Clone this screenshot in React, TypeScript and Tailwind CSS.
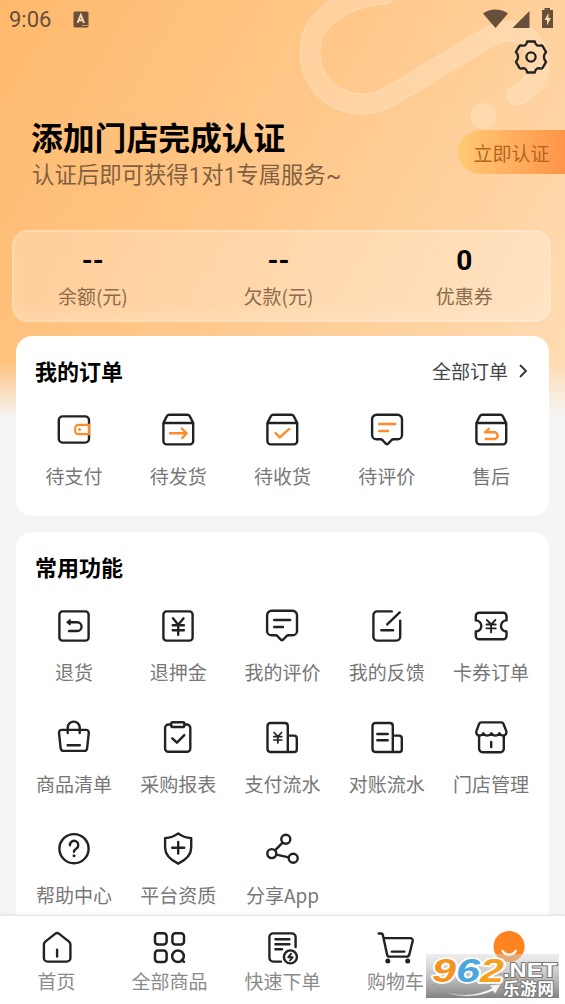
import type { ReactNode } from "react";

const INK = "#222222";
const ORANGE = "#ff8a2a";

type IconProps = {
  children: ReactNode;
  width?: number;
};

const Icon = ({ children, width = 2.4 }: IconProps) => (
  <svg
    width="36"
    height="36"
    viewBox="0 0 36 36"
    fill="none"
    stroke={INK}
    strokeWidth={width}
    strokeLinecap="round"
    strokeLinejoin="round"
    className="shrink-0 overflow-visible"
  >
    {children}
  </svg>
);

const Box = () => (
  <path d="M3.4 11v18a3.4 3.4 0 0 0 3.4 3.4h23a3.4 3.4 0 0 0 3.4-3.4V11H3.4L6.6 4.6A3 3 0 0 1 9.2 2.8h18.2A3 3 0 0 1 30 4.6L33.2 11" />
);

const Bubble = () => (
  <path d="M7.5 2.8h21A4.4 4.4 0 0 1 33 7.2v15.7a4.4 4.4 0 0 1-4.4 4.4h-4.2c-.8 0-1.4.3-2 .9L18.9 31.9a1.3 1.3 0 0 1-1.8 0L13.6 28.2c-.6-.6-1.2-.9-2-.9H7.5A4.4 4.4 0 0 1 3.1 22.9V7.2A4.4 4.4 0 0 1 7.5 2.8z" />
);

const Building = () => (
  <path d="M24 15.6h6a2.8 2.8 0 0 1 2.8 2.8v11a2.6 2.6 0 0 1-2.6 2.6H6.4a2.9 2.9 0 0 1-2.9-2.9V5.9A2.9 2.9 0 0 1 6.4 3h14.5a2.9 2.9 0 0 1 2.9 2.9V32" />
);

const orders = [
  {
    label: "待支付",
    icon: (
      <Icon>
        <rect x="2.8" y="4.4" width="30.2" height="26.2" rx="3.8" />
        <path d="M34 12.9H22.5a3.3 3.3 0 0 0-3.3 3.3v2.7a3.3 3.3 0 0 0 3.3 3.3H34" stroke={ORANGE} fill="#fff" strokeLinecap="butt" strokeWidth="2.2" />
        <path d="M33 12v11" stroke={ORANGE} strokeLinecap="butt" />
        <circle cx="23.5" cy="17.5" r="1.5" fill={ORANGE} stroke="none" />
      </Icon>
    ),
  },
  {
    label: "待发货",
    icon: (
      <Icon>
        <Box />
        <path d="M10 21.3h16.2M21.8 16.5l4.8 4.8-4.3 4.7" stroke={ORANGE} />
      </Icon>
    ),
  },
  {
    label: "待收货",
    icon: (
      <Icon>
        <Box />
        <path d="M11.5 21l4.3 4.4 9.4-8.5" stroke={ORANGE} />
      </Icon>
    ),
  },
  {
    label: "待评价",
    icon: (
      <Icon>
        <Bubble />
        <path d="M10.2 12h16M10.2 19H19" stroke={ORANGE} />
      </Icon>
    ),
  },
  {
    label: "售后",
    icon: (
      <Icon>
        <Box />
        <path d="M15.8 16.8l-3.8 3.5h9.3a3.35 3.35 0 0 1 0 6.7h-8.6" stroke={ORANGE} />
      </Icon>
    ),
  },
];

const functions = [
  {
    label: "退货",
    icon: (
      <Icon>
        <rect x="3.4" y="3.4" width="29.2" height="29.2" rx="3.2" />
        <path d="M13 14.3h8.2a4.35 4.35 0 0 1 0 8.7H13" />
        <path d="M14 11.8v5l-3-2.5z" fill={INK} strokeWidth="1.4" />
      </Icon>
    ),
  },
  {
    label: "退押金",
    icon: (
      <Icon>
        <rect x="3.4" y="3.4" width="29.2" height="29.2" rx="3.2" />
        <path d="M13 10.3l5.2 6.4 5.4-6.4M12.7 17.2h11.2M12.7 22.2h11.2M18.2 16.7v10" />
      </Icon>
    ),
  },
  {
    label: "我的评价",
    icon: (
      <Icon>
        <Bubble />
        <path d="M10.2 12h16M10.2 19H19" />
      </Icon>
    ),
  },
  {
    label: "我的反馈",
    icon: (
      <Icon>
        <path d="M22.8 3.4H8.2a3.8 3.8 0 0 0-3.8 3.8v21.6a3.8 3.8 0 0 0 3.8 3.8h19.2a3.8 3.8 0 0 0 3.8-3.8V12.6M30.7 4.4L18.2 16.4M12.3 22.3h11.8" />
      </Icon>
    ),
  },
  {
    label: "卡券订单",
    icon: (
      <Icon>
        <path d="M6.2 4.7h23.9a3.4 3.4 0 0 1 3.4 3.4v4.3a5.5 5.5 0 0 0 0 11.1v4.4a3.4 3.4 0 0 1-3.4 3.4H6.2a3.4 3.4 0 0 1-3.4-3.4v-4.4a5.5 5.5 0 0 0 0-11.1V8.1a3.4 3.4 0 0 1 3.4-3.4z" />
        <path d="M13.9 12l4.2 4.3 4.3-4.3M13.5 16.5h9.2M13.5 20.4h9.2M18.1 16.3v8.1" strokeWidth="1.9" />
      </Icon>
    ),
  },
  {
    label: "商品清单",
    icon: (
      <Icon>
        <path d="M5.6 9.9h24.6a2.7 2.7 0 0 1 2.6 3l-1.7 15.4a3 3 0 0 1-3 2.6H7.7a3 3 0 0 1-3-2.6L3 12.9a2.7 2.7 0 0 1 2.6-3zM11.7 13V7.6a6 6 0 0 1 12 0V13M11.6 25.2h12.2" />
      </Icon>
    ),
  },
  {
    label: "采购报表",
    icon: (
      <Icon>
        <path d="M10.8 4.5H8.5A3.4 3.4 0 0 0 5.1 7.9v20.5a3.4 3.4 0 0 0 3.4 3.4h18.4a3.4 3.4 0 0 0 3.4-3.4V7.9a3.4 3.4 0 0 0-3.4-3.4h-2.3" />
        <rect x="11.2" y="2.2" width="13.2" height="4.8" rx="1.6" />
        <path d="M12.3 18.4l4.6 4.3 7.4-7.6" />
      </Icon>
    ),
  },
  {
    label: "支付流水",
    icon: (
      <Icon>
        <Building />
        <path d="M10 12.5l3.8 4 3.8-4M9.8 16.6h8M9.8 20h8M13.8 16.5v6.4" strokeWidth="1.7" />
      </Icon>
    ),
  },
  {
    label: "对账流水",
    icon: (
      <Icon>
        <Building />
        <path d="M8.3 14h10.4M8.3 20.2h10.4" />
      </Icon>
    ),
  },
  {
    label: "门店管理",
    icon: (
      <Icon>
        <path d="M8.2 2.4h20.2a2.2 2.2 0 0 1 2 1.3l2.9 7.4c.8 2.3-1 4.5-3.2 4.5-1.8 0-3-1-3.7-2.3-.7 1.3-2.2 2.3-4 2.3s-3.3-1-4-2.3c-.8 1.3-2.3 2.3-4.1 2.3s-3.3-1-4-2.3c-.7 1.3-1.9 2.3-3.7 2.3-2.2 0-4-2.2-3.2-4.5l2.8-7.4a2.2 2.2 0 0 1 2-1.3z" />
        <path d="M6.1 15.8v13a3.4 3.4 0 0 0 3.4 3.4h17.9a3.4 3.4 0 0 0 3.4-3.4v-13M18.2 22v5" />
      </Icon>
    ),
  },
  {
    label: "帮助中心",
    icon: (
      <Icon>
        <circle cx="18" cy="17.7" r="14.6" />
        <path d="M13.9 14.2a4.2 4.2 0 1 1 6.5 3.3c-1.5 1-2.4 1.6-2.4 3.3" />
        <circle cx="18" cy="24.8" r="1.5" fill={INK} stroke="none" />
      </Icon>
    ),
  },
  {
    label: "平台资质",
    icon: (
      <Icon>
        <path d="M18.2 2.4c3.6 2.9 8.2 4.5 13 4.7v9.7c0 7.3-5.6 12.3-13 15.9-7.4-3.6-13.1-8.6-13.1-15.9V7.1c4.9-.2 9.5-1.8 13.1-4.7z" />
        <path d="M12.2 16.7h12M18.2 10.9v11.6" />
      </Icon>
    ),
  },
  {
    label: "分享App",
    icon: (
      <Icon>
        <circle cx="21.8" cy="8.3" r="4.5" />
        <circle cx="7.8" cy="22.6" r="4.5" />
        <circle cx="29.2" cy="27.3" r="4.5" />
        <path d="M18.6 11.6l-7.6 7.8M12.3 23.6l12.4 2.7" />
      </Icon>
    ),
  },
];

const tabs = [
  {
    label: "首页",
    icon: (
      <Icon>
        <path d="M16.1 3.9L6.3 11.6a4 4 0 0 0-1.4 3.1v13.2a3.7 3.7 0 0 0 3.7 3.7h19.1a3.7 3.7 0 0 0 3.7-3.7V14.7a4 4 0 0 0-1.4-3.1l-9.8-7.7a3.3 3.3 0 0 0-4.1 0zM18.1 19.8v6.8" />
      </Icon>
    ),
  },
  {
    label: "全部商品",
    icon: (
      <Icon width={2.5}>
        <rect x="3" y="3.2" width="11.6" height="11.4" rx="3" />
        <rect x="20.4" y="3.2" width="11.6" height="11.4" rx="3" />
        <rect x="3" y="20.5" width="11.6" height="11.4" rx="3" />
        <circle cx="26" cy="26.2" r="5.8" />
        <path d="M29.8 29.8l2.2 2" />
      </Icon>
    ),
  },
  {
    label: "快速下单",
    icon: (
      <Icon>
        <path d="M16 31.6H8.2a3.8 3.8 0 0 1-3.8-3.8V7.2a3.8 3.8 0 0 1 3.8-3.8h18.6a3.8 3.8 0 0 1 3.8 3.8v9.9M10.4 9.2h14M10.4 14.2h14M10.4 19.3H17" />
        <circle cx="25.4" cy="26.9" r="6.5" />
        <path d="M26.2 23.7l-3 3.6h4.4l-2.7 3.2" strokeWidth="1.9" />
      </Icon>
    ),
  },
  {
    label: "购物车",
    icon: (
      <Icon>
        <path d="M.7 3.5h2.6a1.6 1.6 0 0 1 1.5 1.2l4.3 20a2.4 2.4 0 0 0 2.4 1.9h16.9a3 3 0 0 0 3-2.4L34.7 11a2.4 2.4 0 0 0-2.4-2.9H6M13.8 21.6h12.6" />
        <circle cx="9.8" cy="31" r="2.5" fill={INK} stroke="none" />
        <circle cx="29.7" cy="31" r="2.5" fill={INK} stroke="none" />
      </Icon>
    ),
  },
  {
    label: "我的",
    active: true,
    icon: (
      <Icon>
        <circle cx="18.1" cy="16.5" r="15.5" fill="#ff8420" stroke="none" />
        <path d="M11.5 21c3.5 5 9.800 5 13.300 0" stroke="#fff" strokeWidth="2.400" />
      </Icon>
    ),
  },
];

const stats = [
  { value: "--", label: "余额(元)" },
  { value: "--", label: "欠款(元)" },
  { value: "0", label: "优惠券" },
];

type Item = { label: string; icon: ReactNode };

const IconGrid = ({ items }: { items: Item[] }) => (
  <div className="grid grid-cols-5 gap-y-[33.5px] px-1.5">
    {items.map((item) => (
      <div key={item.label} className="flex flex-col items-center gap-3.5">
        {item.icon}
        <span className="text-[19px] leading-7 whitespace-nowrap text-[#777]">{item.label}</span>
      </div>
    ))}
  </div>
);

const StatusBar = () => (
  <div className="flex h-9 shrink-0 items-start justify-between pt-2 pr-[11px] pl-[9px] text-[#66503a]">
    <div className="flex items-center">
      <span className="font-[Roboto] text-[22px] leading-6">9:06</span>
      <svg width="16" height="17" viewBox="0 0 16 17" className="mb-0.5 ml-[22px]">
        <rect x="0.5" y="0.5" width="15" height="16" rx="1.5" fill="currentColor" />
        <path d="M4.5 12L7.8 4l3.3 8M5.8 9.3h4" fill="none" stroke="#ffd7a8" strokeWidth="1.9" />
        <path d="M9 14.5h6" stroke="#c99d6c" strokeWidth="1" />
      </svg>
    </div>
    <svg width="71" height="22" viewBox="0 0 71 22" fill="currentColor">
      <path d="M0 5.5C7 .2 18 .2 25 5.500L12.500 20z" />
      <path d="M46.500 3v17H29.500z" />
      <path d="M61.500 0h5.500v2h3v18H59V2h2.500z" />
      <path d="M65.500 5l-4 7h2.500v5.500l4-7.500h-2.500z" fill="#ffd7a8" />
    </svg>
  </div>
);

const Header = () => (
  <header className="relative h-[194px] shrink-0 pt-[77px] pl-8">
    <svg width="34" height="34" viewBox="0 0 34 34" fill="none" stroke={INK} strokeWidth="2.3" strokeLinejoin="round" className="absolute top-[3.5px] right-[17.5px]">
      <path d="M13.2 1.5h7.6c.6 3.6 2.8 5 6.4 3.8l1.3.6 3.600 6.200c-2.900 2.700-2.900 7.100 0 9.800l-3.700 6.300-1.300.5c-3.500-1.200-5.700.2-6.300 3.800h-7.600c-.6-3.600-2.800-5-6.300-3.800l-1.300-.5-3.700-6.300c2.900-2.700 2.900-7.100 0-9.800l3.600-6.200 1.300-.6c3.600 1.200 5.800-.2 6.400-3.800z" />
      <circle cx="17" cy="17" r="4.6" />
    </svg>
    <h1 className="-ml-px text-[31.8px] leading-[46px] font-bold text-black">添加门店完成认证</h1>
    <p className="text-[22.4px] leading-7 text-[#806040]">
      认证后即可获得<span className="font-[Roboto]">1</span>对<span className="font-[Roboto]">1</span>专属服务<span className="font-[Roboto]">~</span>
    </p>
    <button className="absolute top-[94px] right-0 h-11 w-[107px] rounded-l-full bg-linear-to-r from-[#ffc974] to-[#ff9448] pt-0.5 text-[19px] text-[#b56520]">
      立即认证
    </button>
  </header>
);

const RIBBON = "M385-6C340-2 310 20 310 52c0 34 28 52 52 52 12 0 22-4 32-10l93-56c30-18 56 4 51 32-3 14-11 21-21 25";

const Decoration = () => (
  <svg width="565" height="230" viewBox="0 0 565 230" fill="none" strokeLinecap="round" className="absolute top-0 left-0">
    <defs>
      <linearGradient id="ribbon" gradientUnits="userSpaceOnUse" x1="300" y1="0" x2="550" y2="100">
        <stop offset="0" stopColor="#ffd09c" />
        <stop offset="1" stopColor="#ffdbb1" />
      </linearGradient>
      <linearGradient id="ribbonEdge" gradientUnits="userSpaceOnUse" x1="300" y1="0" x2="550" y2="100">
        <stop offset="0" stopColor="#ffd8aa" />
        <stop offset="1" stopColor="#ffdfb9" />
      </linearGradient>
    </defs>
    <path d={RIBBON} stroke="url(#ribbonEdge)" strokeWidth="21" />
    <path d={RIBBON} stroke="url(#ribbon)" strokeWidth="18.5" />
    <circle cx="483.5" cy="116" r="12.5" fill="#ffd9ad" stroke="#ffddb5" />
  </svg>
);

const Watermark = () => (
  <svg width="133" height="44" viewBox="0 0 133 44" className="absolute right-1.5 bottom-1.5 overflow-visible">
    <defs>
      <linearGradient id="plate" x1="0" y1="0" x2="0" y2="1">
        <stop offset="0" stopColor="#d8d8d8" stopOpacity=".45" />
        <stop offset=".5" stopColor="#a8a8a8" stopOpacity=".7" />
        <stop offset="1" stopColor="#777" stopOpacity=".92" />
      </linearGradient>
    </defs>
    <rect width="133" height="44" fill="url(#plate)" />
    <path d="M7 30c15 14 42 13 59 4l-3-3 12-1-6 10-2-3c-21 9-47 6-60-7z" fill="#f4f4f4" stroke="#888" strokeWidth=".5" />
    <g fontFamily="'Liberation Sans', sans-serif" fontWeight="700" fontStyle="italic" fontSize="34" stroke="#fff" strokeWidth="3.500" strokeLinejoin="round" style={{ paintOrder: "stroke" }}>
      <text x="6" y="28" textLength="24" lengthAdjust="spacingAndGlyphs" fill="#f6921e">9</text>
      <text x="30" y="28" textLength="24" lengthAdjust="spacingAndGlyphs" fill="#4ba6e0">6</text>
      <text x="54" y="28" textLength="24" lengthAdjust="spacingAndGlyphs" fill="#f5a01e">2</text>
    </g>
    <g fill="#fff" stroke="#777" strokeWidth="2" strokeLinejoin="round" fontWeight="700" style={{ paintOrder: "stroke" }}>
      <text x="77" y="23" textLength="54" lengthAdjust="spacingAndGlyphs" fontFamily="'Liberation Sans', sans-serif" fontSize="20">.NET</text>
      <text x="77" y="40.5" textLength="51" lengthAdjust="spacing" fontFamily="'Noto Sans CJK SC', sans-serif" fontSize="16.500">乐游网</text>
    </g>
  </svg>
);

const TabBar = () => (
  <nav className="relative grid h-[89px] shrink-0 grid-cols-5 border-t border-[#e4e4e4] bg-white pt-3.5 shadow-[0_-1px_3px_rgba(0,0,0,0.06)]">
    {tabs.map((tab) => (
      <div key={tab.label} className="flex flex-col items-center">
        {tab.icon}
        <span className={tab.active ? "text-[19px] leading-[29px] text-[#f47a28]" : "text-[19px] leading-[29px] text-[#8a8a8a]"}>
          {tab.label}
        </span>
      </div>
    ))}
    <Watermark />
  </nav>
);

const App = () => {
  return (
    <div className="relative flex h-[1004px] w-[565px] flex-col overflow-hidden bg-[#f5f5f5] font-['Noto_Sans_CJK_SC',sans-serif]">
      <div className="absolute inset-x-0 top-0 h-[418px] bg-linear-[120deg,#ffb96c_0%,#ffc98d_50%,#ffddb5_100%]">
        <div className="absolute inset-x-0 bottom-0 h-14 bg-linear-to-b from-[#f5f5f500] to-[#f5f5f5]" />
        <Decoration />
      </div>

      <div className="relative flex min-h-0 flex-1 flex-col overflow-hidden">
        <StatusBar />
        <Header />

        <section className="mr-3.5 ml-3 h-[92px] shrink-0 rounded-2xl border-2 border-white/20 bg-white/25 pt-[11px] shadow-[inset_0_-8px_12px_rgba(255,255,255,0.12)]">
          <div className="-mr-2 -ml-3.5 grid grid-cols-3">
            {stats.map((stat, index) => (
              <div key={index} className="flex flex-col items-center">
                <span className="font-[Roboto] text-[28px] leading-9 font-bold text-black">{stat.value}</span>
                <span className="text-[19px] leading-[34px] text-[#8a6c4c]">{stat.label}</span>
              </div>
            ))}
          </div>
        </section>

        <section className="mx-4 mt-3.5 h-[180px] shrink-0 rounded-2xl bg-white">
          <div className="flex h-[76px] items-start justify-between pt-[18px] pr-[21px] pl-[19px]">
            <h2 className="text-[22px] leading-8 font-bold text-black">我的订单</h2>
            <div className="flex items-center gap-2.5 pt-px">
              <span className="text-[19px] leading-8 text-[#444]">全部订单</span>
              <svg width="10" height="14" viewBox="0 0 10 14" fill="none" stroke="#333" strokeWidth="1.8">
                <path d="M2 1l6 6-6 6" />
              </svg>
            </div>
          </div>
          <IconGrid items={orders} />
        </section>

        <section className="mx-4 mt-4 h-[400px] shrink-0 rounded-2xl bg-white">
          <h2 className="h-[76px] pt-[18px] pl-[19px] text-[22px] leading-8 font-bold text-black">常用功能</h2>
          <IconGrid items={functions} />
        </section>
      </div>

      <TabBar />
    </div>
  );
};

export default App;
